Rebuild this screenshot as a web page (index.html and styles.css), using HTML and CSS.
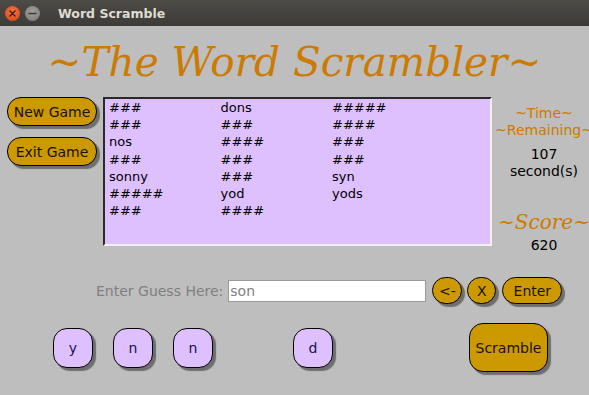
FILE: index.html
```html
<!DOCTYPE html>
<html>
<head>
<meta charset="utf-8">
<link rel="stylesheet" href="styles.css">
</head>
<body>
<div class="titlebar">
  <span class="wbtn close"><svg width="15" height="15" viewBox="0 0 15 15"><path d="M5 5 L10 10 M10 5 L5 10" stroke="#3a1a10" stroke-width="1.4" stroke-linecap="round"/></svg></span>
  <span class="wbtn minimize"><svg width="15" height="15" viewBox="0 0 15 15"><path d="M4 7.5 H11" stroke="#3c3b37" stroke-width="1.4" stroke-linecap="round"/></svg></span>
  <span class="wtitle">Word Scramble</span>
</div>
<div class="app">
  <h1 class="heading">~The Word Scrambler~</h1>
  <div class="middle">
    <div class="side">
      <button class="gold side-btn">New Game</button>
      <button class="gold side-btn">Exit Game</button>
    </div>
    <div class="list">
      <span>###</span><span>dons</span><span>#####</span>
      <span>###</span><span>###</span><span>####</span>
      <span>nos</span><span>####</span><span>###</span>
      <span>###</span><span>###</span><span>###</span>
      <span>sonny</span><span>###</span><span>syn</span>
      <span>#####</span><span>yod</span><span>yods</span>
      <span>###</span><span>####</span><span></span>
    </div>
    <div class="info">
      <div class="orange">~Time~</div>
      <div class="orange">~Remaining~</div>
      <div class="val first">107</div>
      <div class="val">second(s)</div>
      <div class="score">~Score~</div>
      <div class="val points">620</div>
    </div>
  </div>
  <div class="guess">
    <label class="glabel">Enter Guess Here:</label>
    <div class="entry">son</div>
    <button class="gold small back">&lt;-</button>
    <button class="gold small clear">X</button>
    <button class="gold small enter">Enter</button>
  </div>
  <div class="tiles">
    <div class="tile">y</div>
    <div class="tile">n</div>
    <div class="tile">n</div>
    <div class="tile empty"></div>
    <div class="tile">d</div>
    <button class="gold scramble">Scramble</button>
  </div>
</div>
</body>
</html>
```
FILE: styles.css
```css
html, body {
  margin: 0;
  padding: 0;
}
body {
  width: 589px;
  height: 395px;
  overflow: hidden;
  background: #bebebe;
  font-family: "DejaVu Sans", sans-serif;
  font-size: 14px;
}
.titlebar {
  height: 26px;
  background: linear-gradient(#4c4b46, #3c3b37);
  display: flex;
  align-items: center;
  padding-left: 5px;
  box-sizing: border-box;
}
.wbtn {
  width: 15px;
  height: 15px;
  border-radius: 50%;
  display: flex;
  align-items: center;
  justify-content: center;
  margin-right: 5px;
}
.close {
  background: radial-gradient(circle at 50% 40%, #f7784a, #e0501c 70%, #b8401a);
}
.minimize {
  background: radial-gradient(circle at 50% 40%, #a4a29c, #85837d 70%, #6d6b66);
}
.wtitle {
  margin-left: 13px;
  color: #dfdbd2;
  font-weight: bold;
  font-size: 12.5px;
}
.app {
  display: flex;
  flex-direction: column;
}
.heading {
  margin: 0;
  height: 71px;
  display: flex;
  align-items: center;
  justify-content: center;
  font-family: "DejaVu Serif", serif;
  font-style: italic;
  font-weight: normal;
  font-size: 40.5px;
  color: #cc7a00;
}
.middle {
  display: flex;
  height: 149px;
  align-items: flex-start;
}
.side {
  display: flex;
  flex-direction: column;
  flex-shrink: 0;
  gap: 11px;
  margin-left: 7px;
  width: 90px;
}
.gold {
  background: #cc9900;
  border: 1px solid #000;
  color: #1a1200;
  font-family: "DejaVu Sans", sans-serif;
  font-size: 14px;
  padding: 0;
  box-shadow: 3px 3px 1px #6e6e6e;
}
.side-btn {
  width: 90px;
  height: 29px;
  border-radius: 14px;
}
.list {
  flex-shrink: 0;
  margin-left: 6px;
  width: 389px;
  height: 149px;
  box-sizing: border-box;
  background: #dfc0ff;
  border: 2px solid #2a2a2a;
  border-right-color: #f0f0f0;
  border-bottom-color: #f0f0f0;
  padding: 0 4px;
  display: grid;
  grid-template-columns: 111.5px 111.5px 111.5px;
  grid-auto-rows: 17.2px;
  align-content: start;
  font-size: 13px;
  line-height: 17px;
  color: #000;
}
.info {
  flex: 1;
  min-width: 0;
  text-align: center;
  line-height: 17px;
  padding-top: 8px;
  padding-left: 7px;
  white-space: nowrap;
  display: flex;
  flex-direction: column;
  align-items: center;
}
.orange {
  color: #cc7a00;
}
.val {
  color: #000;
}
.first {
  margin-top: 7px;
}
.score {
  margin-top: 30px;
  font-family: "DejaVu Serif", serif;
  font-style: italic;
  font-size: 20px;
  line-height: 24px;
  color: #cc7a00;
}
.points {
  margin-top: 3px;
}
.guess {
  display: flex;
  align-items: center;
  margin-top: 31px;
  height: 27px;
  margin-left: 96px;
}
.glabel {
  color: #808080;
  margin-right: 5px;
}
.entry {
  width: 198px;
  height: 22px;
  box-sizing: border-box;
  background: #fff;
  border: 1px solid #9a9a9a;
  color: #808080;
  padding-left: 1px;
  line-height: 20px;
  margin-right: 6px;
}
.small {
  height: 27px;
  border-radius: 14px;
  margin-right: 5px;
}
.back { width: 30px; }
.clear { width: 29px; margin-right: 6px; }
.enter { width: 60px; }
.tiles {
  display: flex;
  align-items: center;
  margin-top: 19px;
  margin-left: 53px;
  margin-right: 41px;
  height: 49px;
}
.tile {
  width: 40px;
  height: 40px;
  box-sizing: border-box;
  border: 1px solid #000;
  border-radius: 14px;
  background: #dfc0ff;
  color: #1a1050;
  display: flex;
  align-items: center;
  justify-content: center;
  margin-right: 20px;
  box-shadow: 3px 3px 1px #6e6e6e;
}
.tile.empty {
  visibility: hidden;
}
.scramble {
  margin-left: auto;
  width: 79px;
  height: 49px;
  border-radius: 14px;
}
```
